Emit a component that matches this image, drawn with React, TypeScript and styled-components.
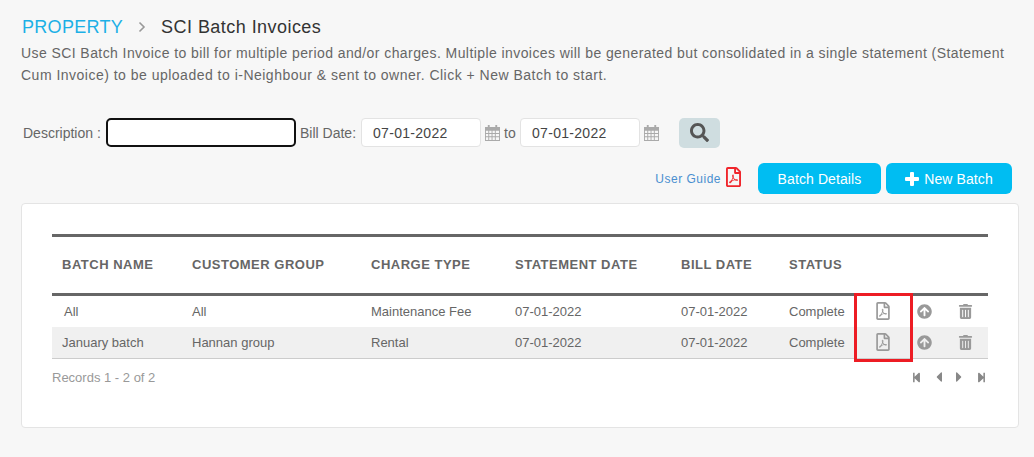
import React from "react";
import styled, { createGlobalStyle } from "styled-components";
import {
  FaArrowCircleUp,
  FaCaretLeft,
  FaCaretRight,
  FaRegFilePdf,
  FaSearch,
  FaStepBackward,
  FaStepForward,
  FaTrashAlt,
} from "react-icons/fa";

const rows = [
  { name: "All", inset: true, group: "All", charge: "Maintenance Fee", statement: "07-01-2022", bill: "07-01-2022", status: "Complete" },
  { name: "January batch", inset: false, group: "Hannan group", charge: "Rental", statement: "07-01-2022", bill: "07-01-2022", status: "Complete" },
];

const headers = ["BATCH NAME", "CUSTOMER GROUP", "CHARGE TYPE", "STATEMENT DATE", "BILL DATE", "STATUS"];

function CalendarIcon() {
  return (
    <CalendarSvg viewBox="0 0 16 17" aria-hidden="true">
      <path
        fill="#aaa"
        fillRule="evenodd"
        d="M3 0h2v2h6V0h2v2h3v15H0V2h3zM1 6v2.5h2.5V6zm3.500 0v2.500h2.500V6zm3.500 0v2.500h2.500V6zm3.500 0v2.500H15V6zM1 9.500V12h2.500V9.500zm3.500 0V12h2.500V9.500zm3.500 0V12h2.500V9.500zm3.500 0V12H15V9.500zM1 13v3h2.500v-3zm3.500 0v3h2.500v-3zm3.500 0v3h2.500v-3zm3.500 0v3H15v-3z"
      />
    </CalendarSvg>
  );
}

export default function App() {
  return (
    <>
      <GlobalStyle />
      <Page>
        <Breadcrumb>
          <Crumb>PROPERTY</Crumb>
          <Chevron viewBox="0 0 8 12" aria-hidden="true">
            <path d="M1.500 1.500 6 6l-4.500 4.500" />
          </Chevron>
          <PageTitle>SCI Batch Invoices</PageTitle>
        </Breadcrumb>
        <Intro>
          <IntroLine $spacing={0.42}>
            Use SCI Batch Invoice to bill for multiple period and/or charges. Multiple invoices will be generated but
            consolidated in a single statement (Statement
          </IntroLine>
          <IntroLine $spacing={0.49}>
            Cum Invoice) to be uploaded to i-Neighbour &amp; sent to owner. Click + New Batch to start.
          </IntroLine>
        </Intro>

        <FilterRow>
          <FilterLabel>Description :</FilterLabel>
          <DescriptionInput type="text" />
          <BillLabel>Bill Date:</BillLabel>
          <DateInput type="text" defaultValue="07-01-2022" />
          <CalendarIcon />
          <ToLabel>to</ToLabel>
          <DateInput type="text" defaultValue="07-01-2022" />
          <CalendarIcon />
          <SearchButton aria-label="Search">
            <FaSearch />
          </SearchButton>
        </FilterRow>

        <ActionRow>
          <GuideLink href="#">User Guide</GuideLink>
          <GuideIcon />
          <ActionButton $width={123}>Batch Details</ActionButton>
          <ActionButton $width={126}>
            <svg viewBox="0 0 14 14" aria-hidden="true">
              <path fill="currentColor" d="M5 1q0-1 1-1h2q1 0 1 1v4h4q1 0 1 1v2q0 1-1 1H9v4q0 1-1 1H6q-1 0-1-1V9H1q-1 0-1-1V6q0-1 1-1h4z" />
            </svg>
            New Batch
          </ActionButton>
        </ActionRow>

        <Card>
          <TableWrap>
            <Table>
              <colgroup>
                <col width={130} />
                <col width={179} />
                <col width={144} />
                <col width={166} />
                <col width={108} />
                <col width={77} />
                <col width={61} />
                <col width={41} />
                <col width={30} />
              </colgroup>
              <thead>
                <tr>
                  {headers.map((h) => (
                    <HeadCell key={h}>{h}</HeadCell>
                  ))}
                  <HeadCell colSpan={3} />
                </tr>
              </thead>
              <tbody>
                {rows.map((row) => (
                  <BodyRow key={row.name}>
                    <NameCell $inset={row.inset}>{row.name}</NameCell>
                    <Cell>{row.group}</Cell>
                    <Cell>{row.charge}</Cell>
                    <Cell>{row.statement}</Cell>
                    <Cell>{row.bill}</Cell>
                    <Cell>{row.status}</Cell>
                    <IconCell $pad={18}>
                      <FaRegFilePdf size={18} />
                    </IconCell>
                    <IconCell>
                      <FaArrowCircleUp size={15} />
                    </IconCell>
                    <IconCell>
                      <FaTrashAlt size={15} />
                    </IconCell>
                  </BodyRow>
                ))}
              </tbody>
            </Table>
            <Highlight />
          </TableWrap>
          <TableFooter>
            <Records>Records 1 - 2 of 2</Records>
            <Pager>
              <FaStepBackward size={11} />
              <FaCaretLeft size={16} />
              <FaCaretRight size={16} />
              <FaStepForward size={11} />
            </Pager>
          </TableFooter>
        </Card>
      </Page>
    </>
  );
}

const GlobalStyle = createGlobalStyle`
  html, body {
    margin: 0;
    background: #f7f7f7;
    font-family: "Liberation Sans", Arial, sans-serif;
  }
`;

const Page = styled.div`
  box-sizing: border-box;
  width: 1034px;
  height: 457px;
  padding: 16px 15px 0 21px;
  overflow: hidden;
`;

const Breadcrumb = styled.div`
  display: flex;
  align-items: center;
  height: 22px;
  font-size: 18px;
  letter-spacing: 0.3px;
`;

const Crumb = styled.span`
  margin-left: 1px;
  color: #1cb0e6;
`;

const Chevron = styled.svg`
  width: 8px;
  height: 12px;
  margin: 0 15px 0 15px;
  fill: none;
  stroke: #999;
  stroke-width: 1.6;
`;

const PageTitle = styled.span`
  color: #333;
  letter-spacing: 0.45px;
`;

const Intro = styled.p`
  margin: 4px 0 0;
  color: #666;
  font-size: 14px;
  line-height: 22px;
`;

const IntroLine = styled.span<{ $spacing: number }>`
  display: block;
  letter-spacing: ${(p) => p.$spacing}px;
  white-space: nowrap;
`;

const FilterRow = styled.div`
  display: flex;
  align-items: center;
  height: 31px;
  margin-top: 31px;
  padding-left: 2px;
  color: #666;
  font-size: 14px;
`;

const FilterLabel = styled.label`
  width: 83px;
`;

const DescriptionInput = styled.input`
  box-sizing: border-box;
  width: 190px;
  height: 29px;
  border: 2px solid #111;
  border-radius: 5px;
  background: #fff;
  outline: none;
`;

const BillLabel = styled.label`
  width: 61px;
  margin-left: 4px;
`;

const DateInput = styled.input`
  box-sizing: border-box;
  width: 120px;
  height: 29px;
  padding: 0 11px;
  border: 1px solid #e3e3e3;
  border-radius: 4px;
  background: #fff;
  color: #444;
  font-family: inherit;
  font-size: 14px;
  letter-spacing: 0.3px;
  outline: none;
`;

const CalendarSvg = styled.svg`
  flex: none;
  width: 15px;
  height: 16px;
  margin-left: 4px;
`;

const ToLabel = styled.span`
  width: 16px;
  margin-left: 4px;
`;

const SearchButton = styled.button`
  display: flex;
  align-items: center;
  justify-content: center;
  width: 41px;
  height: 30px;
  margin-left: 20px;
  border: none;
  border-radius: 5px;
  background: #cfdde0;
  color: #555;
  font-size: 19px;
`;

const ActionRow = styled.div`
  display: flex;
  align-items: center;
  justify-content: flex-end;
  height: 31px;
  margin-top: 15px;
  padding-right: 7px;
`;

const GuideLink = styled.a`
  color: #4a8fd0;
  font-size: 12px;
  letter-spacing: 0.5px;
  text-decoration: none;
`;

const GuideIcon = styled(FaRegFilePdf)`
  width: 17px;
  height: 20px;
  margin: 0 16px 4px 4px;
  color: #f0262c;
`;

const ActionButton = styled.button<{ $width: number }>`
  display: flex;
  align-items: center;
  justify-content: center;
  gap: 5px;
  width: ${(p) => p.$width}px;
  height: 31px;
  margin-left: 5px;
  border: none;
  border-radius: 6px;
  background: #00bdf2;
  color: #fff;
  font-family: inherit;
  font-size: 14px;
  letter-spacing: 0.1px;

  &:first-of-type {
    margin-left: 0;
  }

  svg {
    width: 14px;
    height: 14px;
  }
`;

const Card = styled.section`
  box-sizing: border-box;
  width: 998px;
  height: 225px;
  margin-top: 9px;
  padding: 30px 30px 0;
  border: 1px solid #e4e4e4;
  border-radius: 4px;
  background: #fff;
`;

const TableWrap = styled.div`
  position: relative;
`;

const Table = styled.table`
  width: 936px;
  border-collapse: collapse;
  table-layout: fixed;
  border-top: 3px solid #666;
  color: #666;
  font-size: 13px;
`;

const HeadCell = styled.th`
  height: 54px;
  padding: 0 0 2px 10px;
  border-bottom: 3px solid #666;
  font-size: 13px;
  font-weight: 700;
  letter-spacing: 0.5px;
  text-align: left;
`;

const BodyRow = styled.tr`
  height: 32px;

  &:nth-child(even) {
    background: #f0f0f0;
  }

  &:last-child {
    border-bottom: 1px solid #ccc;
  }
`;

const Cell = styled.td`
  padding: 0 0 0 10px;
  white-space: nowrap;
`;

const NameCell = styled(Cell)<{ $inset: boolean }>`
  padding-left: ${(p) => (p.$inset ? 12 : 10)}px;
`;

const IconCell = styled.td<{ $pad?: number }>`
  padding: 0 0 0 ${(p) => p.$pad ?? 0}px;
  color: #999;
  text-align: left;
  line-height: 0;
  vertical-align: middle;
`;

const Highlight = styled.div`
  position: absolute;
  top: 59px;
  left: 802px;
  width: 53px;
  height: 63px;
  border: 3px solid #ed1c24;
  pointer-events: none;
`;

const TableFooter = styled.div`
  display: flex;
  align-items: center;
  justify-content: space-between;
  width: 936px;
  margin-top: 10px;
`;

const Records = styled.span`
  color: #999;
  font-size: 13px;
`;

const Pager = styled.div`
  display: flex;
  align-items: center;
  gap: 14px;
  padding-right: 1px;
  color: #888;

  svg:nth-child(2),
  svg:nth-child(3) {
    width: 6px;
  }
`;
